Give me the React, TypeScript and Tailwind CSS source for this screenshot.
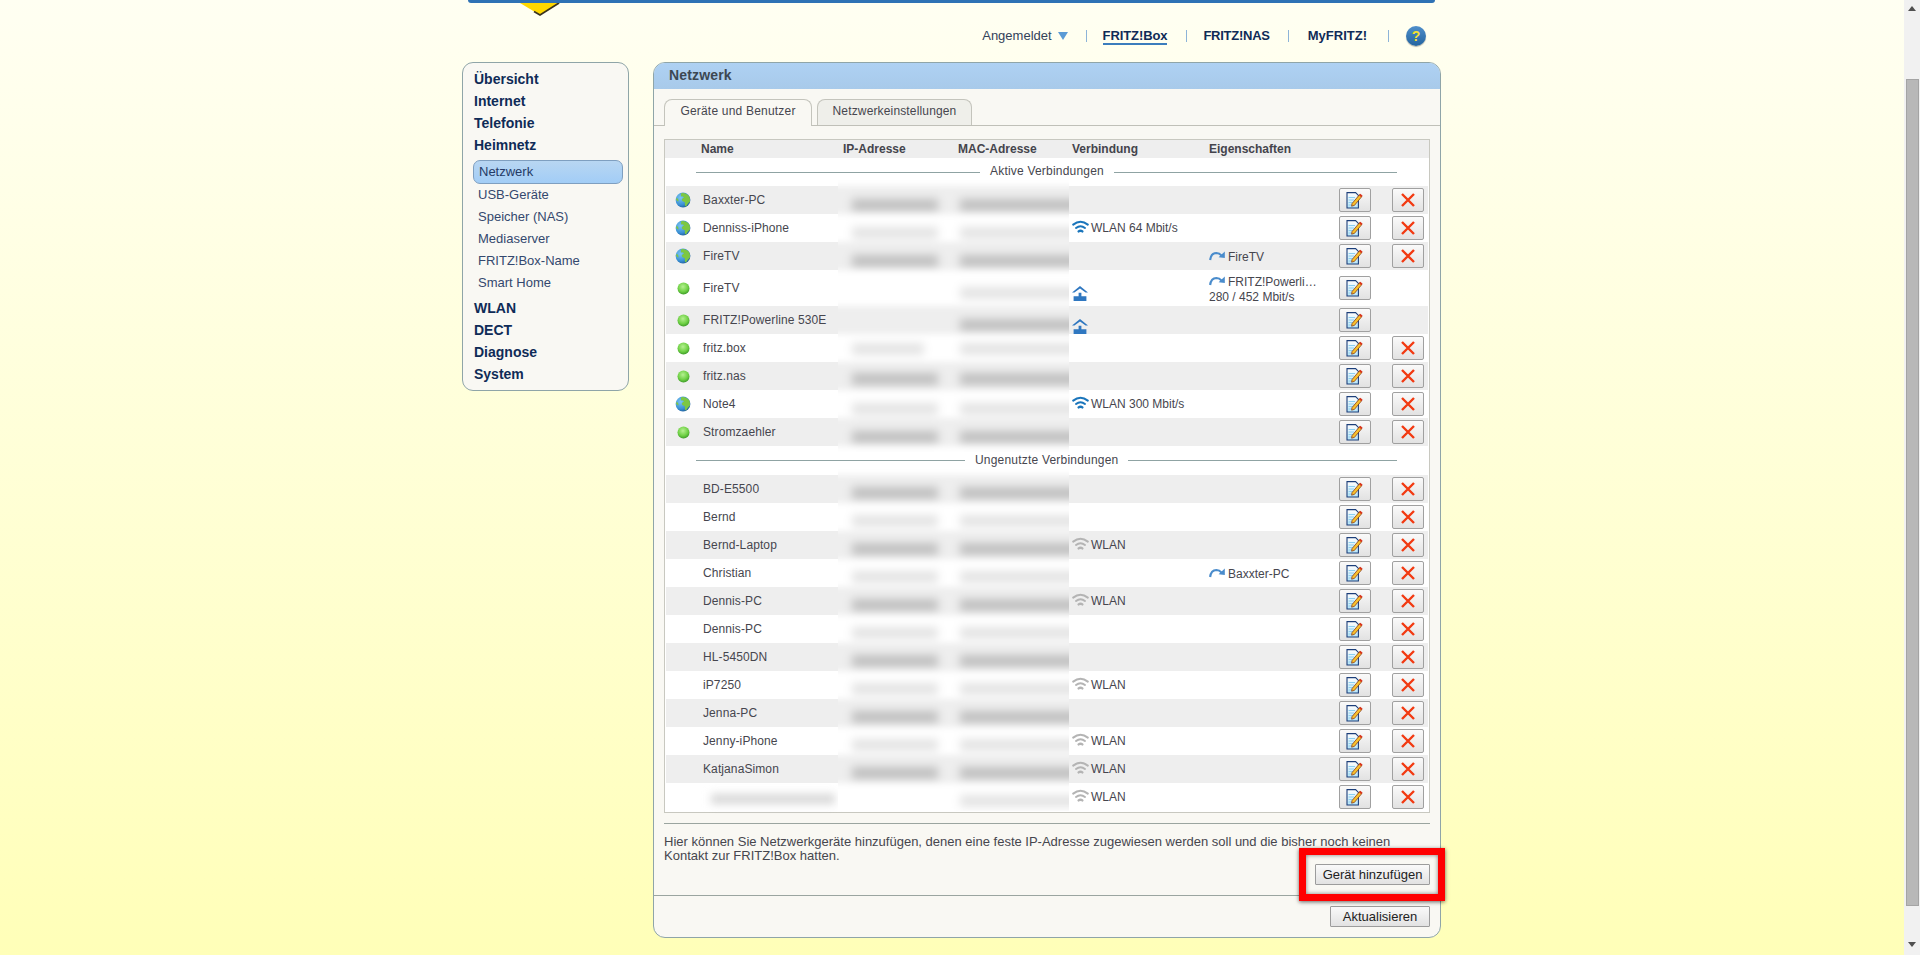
import React from "react";

type Conn = { icon: "wifi" | "wifiGrey" | "house"; text?: string };
type Row = {
  name: string;
  status?: "globe" | "ball";
  conn?: Conn;
  prop?: { first: string; second?: string };
  noDelete?: boolean;
  tall?: boolean;
  hiddenName?: boolean;
};

const active: Row[] = [
  { name: "Baxxter-PC", status: "globe" },
  { name: "Denniss-iPhone", status: "globe", conn: { icon: "wifi", text: "WLAN 64 Mbit/s" } },
  { name: "FireTV", status: "globe", prop: { first: "FireTV" } },
  { name: "FireTV", status: "ball", conn: { icon: "house" }, prop: { first: "FRITZ!Powerli…", second: "280 / 452 Mbit/s" }, noDelete: true, tall: true },
  { name: "FRITZ!Powerline 530E", status: "ball", conn: { icon: "house" }, noDelete: true },
  { name: "fritz.box", status: "ball" },
  { name: "fritz.nas", status: "ball" },
  { name: "Note4", status: "globe", conn: { icon: "wifi", text: "WLAN 300 Mbit/s" } },
  { name: "Stromzaehler", status: "ball" },
];

const unused: Row[] = [
  { name: "BD-E5500" },
  { name: "Bernd" },
  { name: "Bernd-Laptop", conn: { icon: "wifiGrey", text: "WLAN" } },
  { name: "Christian", prop: { first: "Baxxter-PC" } },
  { name: "Dennis-PC", conn: { icon: "wifiGrey", text: "WLAN" } },
  { name: "Dennis-PC" },
  { name: "HL-5450DN" },
  { name: "iP7250", conn: { icon: "wifiGrey", text: "WLAN" } },
  { name: "Jenna-PC" },
  { name: "Jenny-iPhone", conn: { icon: "wifiGrey", text: "WLAN" } },
  { name: "KatjanaSimon", conn: { icon: "wifiGrey", text: "WLAN" } },
  { name: "", hiddenName: true, conn: { icon: "wifiGrey", text: "WLAN" } },
];

function Globe() {
  return (
    <svg width="16" height="16" viewBox="0 0 16 16">
      <defs>
        <radialGradient id="gl" cx="35%" cy="35%" r="80%">
          <stop offset="0%" stopColor="#7cc6f2" />
          <stop offset="60%" stopColor="#3a90d4" />
          <stop offset="100%" stopColor="#164b85" />
        </radialGradient>
      </defs>
      <circle cx="8" cy="8" r="7.4" fill="url(#gl)" />
      <path d="M6.5 1 C9 .6 12 1.5 14 4 C15.2 6 15.2 8 14.8 10 C13.6 10.5 12.6 12 11 14.4 C9.6 14.2 9.6 12 10 10.5 C9.2 9.5 7.2 9.5 6.8 8 C6.6 6.6 8 6 9 5.4 C8.4 4.4 7.2 4.4 6 4.2 C5.8 3 6 2 6.5 1Z" fill="#7cc743" />
      <path d="M1.5 6 C2.6 6.2 3.8 7.4 3.4 9.4 C2.6 9.4 1.6 8.6 1.2 7.8Z" fill="#7cc743" />
    </svg>
  );
}

function Ball() {
  return (
    <svg width="13" height="13" viewBox="0 0 13 13">
      <defs>
        <radialGradient id="bl" cx="45%" cy="35%" r="65%">
          <stop offset="0%" stopColor="#b5f090" />
          <stop offset="65%" stopColor="#6ed044" />
          <stop offset="100%" stopColor="#3f9c2a" />
        </radialGradient>
      </defs>
      <circle cx="6.5" cy="6.5" r="6" fill="url(#bl)" />
    </svg>
  );
}

function Wifi({ color }: { color: string }) {
  return (
    <svg className="-translate-y-px" width="17" height="14" viewBox="0 0 17 14" fill="none" stroke={color} strokeWidth="2" strokeLinecap="round">
      <path d="M1.2 4.6 Q8.5 -1 15.8 4.6" />
      <path d="M4 8 Q8.5 4.4 13 8" />
      <path d="M6.6 11.4 Q8.5 10 10.4 11.4" strokeWidth="2.4" />
    </svg>
  );
}

function House() {
  return (
    <svg width="16" height="15" viewBox="0 0 16 15" fill="#2f77c0">
      <path d="M8 0 L16 6.6 L13.6 6.6 L8 2.6 L2.4 6.6 L0 6.6Z" />
      <path d="M1.6 10.2 H6.6 V6.8 H9.4 V10.2 H14.4 V15 H1.6Z" />
    </svg>
  );
}

function ArrowIcon() {
  return (
    <svg width="16" height="10" viewBox="0 0 16 10" fill="none">
      <path d="M1.1 9 Q2 2.2 7.4 2 Q10.4 2 12.6 4.6" stroke="#4a8ccc" strokeWidth="2.2" />
      <path d="M15.8 0.6 L15.8 7 L9.6 6.2Z" fill="#4a8ccc" />
    </svg>
  );
}

function EditIcon() {
  return (
    <svg width="18" height="17" viewBox="0 0 18 17">
      <defs>
        <linearGradient id="pg" x1="0" y1="0" x2="0" y2="1">
          <stop offset="0%" stopColor="#ffffff" />
          <stop offset="100%" stopColor="#b4e4f8" />
        </linearGradient>
      </defs>
      <path d="M1 .6 H9.6 L12.4 3.4 V16 H1Z" fill="url(#pg)" stroke="#1c3f7a" strokeWidth="1.1" />
      <path d="M2.6 5.5 H9 M2.6 8 H8 M2.6 10.5 H7 M2.6 13 H6" stroke="#8ccff0" strokeWidth="1" />
      <path d="M6 11.6 L13.6 2.6 L15.8 4.6 L8.4 13.4 L5.6 14.2Z" fill="#f8c02c" stroke="#7a2a10" strokeWidth="0.7" />
      <path d="M13 3.3 L14.4 1.7 L16.6 3.7 L15.2 5.3Z" fill="#d8341c" />
    </svg>
  );
}

function XIcon() {
  return (
    <svg width="14" height="14" viewBox="0 0 14 14" fill="none" stroke="#f23a12" strokeWidth="2.4">
      <path d="M1 1 L13 13 M13 1 L1 13" />
    </svg>
  );
}

function IconButton({ children }: { children: React.ReactNode }) {
  return (
    <button className="flex h-6 w-8 items-center justify-center rounded-[2px] border border-[#a0a0a0] bg-gradient-to-b from-[#fafafa] to-[#e2e2e2]">
      {children}
    </button>
  );
}

function TableRow({ row, grey }: { row: Row; grey: boolean }) {
  return (
    <div className={`mx-px flex items-center ${row.tall ? "h-9" : "h-7"} ${grey ? "bg-[#eeeeee]" : "bg-white"}`}>
      <div className="flex w-[37px] justify-center pr-[3px]">
        {row.status === "globe" && <Globe />}
        {row.status === "ball" && <Ball />}
      </div>
      <div className="w-[369px] tracking-[0.1px]">
        {row.hiddenName ? <div className="mt-[3px] ml-2 h-[10px] w-[124px] bg-[#d8d8d8] blur-[4px]" /> : row.name}
      </div>
      <div className="flex h-full w-[137px] items-center">
        {row.conn?.icon === "house" && (
          <div className={`self-end ${row.tall ? "pb-[5px]" : ""}`}>
            <House />
          </div>
        )}
        {row.conn?.icon === "wifi" && <Wifi color="#1a75bb" />}
        {row.conn?.icon === "wifiGrey" && <Wifi color="#b4b4b4" />}
        {row.conn?.text && <span className="ml-0.5">{row.conn.text}</span>}
      </div>
      <div className="w-[130px]">
        {row.prop && (
          <>
            <div className="flex items-center gap-[3px]">
              <ArrowIcon />
              <span className="translate-y-px">{row.prop.first}</span>
            </div>
            {row.prop.second && <div className="leading-[14px]">{row.prop.second}</div>}
          </>
        )}
      </div>
      <div className="w-[53px]">
        <IconButton>
          <EditIcon />
        </IconButton>
      </div>
      {!row.noDelete && (
        <IconButton>
          <XIcon />
        </IconButton>
      )}
    </div>
  );
}

function SectionRow({ text, tall, leftW }: { text: string; tall?: boolean; leftW: string }) {
  return (
    <div className={`flex items-center bg-white pl-[31px] ${tall ? "h-[29px]" : "h-7"}`}>
      <div className={`h-px bg-[#8fa3a3] ${leftW}`} />
      <div className="mx-[10px] -translate-y-px whitespace-nowrap tracking-[0.2px]">{text}</div>
      <div className="h-px flex-1 bg-[#8fa3a3]" />
      <div className="w-8" />
    </div>
  );
}

type Blurred = { h: number; grey: boolean; ip: boolean; mac: boolean; y: number; ipW?: number };

function BlurPatch({ rows, className }: { rows: Blurred[]; className: string }) {
  return (
    <div className={`absolute left-[173px] w-[231px] overflow-hidden bg-white ${className}`}>
      <div className="-mx-3 pt-[6px] blur-[3px]">
        {rows.map((r, i) => (
          <div key={i} className={`relative ${r.grey ? "bg-[#eeeeee]" : "bg-white"}`} style={{ height: r.h }}>
            {r.ip && (
              <div
                className={`absolute left-[26px] h-3 blur-[3px] ${r.grey ? "bg-[#c0c0c0]" : "bg-[#e4e4e4]"}`}
                style={{ top: r.y, width: r.ipW ?? 86 }}
              />
            )}
            {r.mac && (
              <div
                className={`absolute left-[134px] h-3 w-[125px] blur-[3px] ${r.grey ? "bg-[#c0c0c0]" : "bg-[#e4e4e4]"}`}
                style={{ top: r.y }}
              />
            )}
          </div>
        ))}
      </div>
    </div>
  );
}

const activeBlur: Blurred[] = [
  { h: 28, grey: true, ip: true, mac: true, y: 13 },
  { h: 28, grey: false, ip: true, mac: true, y: 13 },
  { h: 28, grey: true, ip: true, mac: true, y: 13 },
  { h: 36, grey: false, ip: false, mac: true, y: 17 },
  { h: 28, grey: true, ip: false, mac: true, y: 13 },
  { h: 28, grey: false, ip: true, mac: true, y: 9, ipW: 72 },
  { h: 28, grey: true, ip: true, mac: true, y: 11 },
  { h: 28, grey: false, ip: true, mac: true, y: 13 },
  { h: 28, grey: true, ip: true, mac: true, y: 13 },
  { h: 9, grey: false, ip: false, mac: false, y: 0 },
];

const unusedBlur: Blurred[] = unused.map((_, i) => ({
  h: 28,
  grey: i % 2 === 0,
  ip: i !== 11,
  mac: true,
  y: 12,
}));

const topNav = ["Übersicht", "Internet", "Telefonie", "Heimnetz"];
const subNav = ["USB-Geräte", "Speicher (NAS)", "Mediaserver", "FRITZ!Box-Name", "Smart Home"];
const bottomNav = ["WLAN", "DECT", "Diagnose", "System"];

function Sidebar() {
  return (
    <aside className="h-[329px] w-[167px] rounded-[11px] border border-[#8fa5a8] bg-[#f9f8f3] pt-[5px] pl-[11px] text-[#0f2b57]">
      {topNav.map((t) => (
        <div key={t} className="h-[22px] text-[14px] leading-[22px] font-bold">
          {t}
        </div>
      ))}
      <div className="mt-[4px] -ml-px h-6 w-[150px] rounded-[7px] border border-[#7f9fc0] bg-gradient-to-b from-[#b8d6f2] to-[#a2cdf6] pl-[5px] text-[13px] leading-[22px] text-[#243a66]">
        Netzwerk
      </div>
      <div>
        {subNav.map((t) => (
          <div key={t} className="h-[22px] pl-1 text-[13px] leading-[22px] text-[#34486e]">
            {t}
          </div>
        ))}
      </div>
      <div className="mt-[3px]">
        {bottomNav.map((t) => (
          <div key={t} className="h-[22px] text-[14px] leading-[22px] font-bold">
            {t}
          </div>
        ))}
      </div>
    </aside>
  );
}

function TopNav() {
  const sep = "h-3 w-px bg-[#8db4d8]";
  return (
    <div className="mt-[22px] flex h-[22px] items-center justify-end pr-[15px] text-[13px]">
      <span className="text-[#33425a]">Angemeldet</span>
      <svg className="ml-[6px]" width="10" height="8" viewBox="0 0 10 8" fill="#5b9bd5">
        <path d="M0 0 H10 L5 8Z" />
      </svg>
      <div className={`ml-[18px] ${sep}`} />
      <span className="ml-4 border-b-2 border-[#3b7dbd] leading-[15px] font-bold tracking-[-0.1px] text-[#0f2b57]">FRITZ!Box</span>
      <div className={`ml-[19px] ${sep}`} />
      <span className="ml-4 font-bold tracking-[-0.25px] text-[#0f2b57]">FRITZ!NAS</span>
      <div className={`ml-[18px] ${sep}`} />
      <span className="ml-[19px] font-bold text-[#0f2b57]">MyFRITZ!</span>
      <div className={`ml-[21px] ${sep}`} />
      <div className="ml-[17px] flex h-5 w-5 items-center justify-center rounded-full bg-gradient-to-b from-[#4f8fcb] to-[#23649f] text-[14px] font-bold text-[#f5e030] shadow-[0_1px_1px_rgba(0,0,0,0.3)]">
        ?
      </div>
    </div>
  );
}

export default function App() {
  return (
    <div className="flex h-[955px] overflow-hidden bg-gradient-to-b from-[#fffff2] to-[#ffffb8] font-['Liberation_Sans',Arial,sans-serif]">
      <div className="flex-1">
        <div className="ml-[462px] w-[979px]">
          <div className="relative mx-[6px] h-[3px] rounded-b-[4px] bg-[#2f72b5]">
            <svg className="absolute top-0 left-[52px]" width="40" height="16" viewBox="0 0 40 16">
              <path d="M0 3 L20 15 L40 3Z" fill="#ffd800" />
              <path d="M14 11.6 L20 15 L39 3" fill="none" stroke="#3a3320" strokeWidth="1.7" />
              <rect x="0" y="0" width="40" height="3" fill="#2f72b5" />
            </svg>
          </div>
          <TopNav />
          <div className="mt-[15px] flex gap-6">
            <Sidebar />
            <main className="flex h-[876px] w-[788px] flex-col rounded-[12px] border border-[#8fa5a8] bg-[#f9f8f3] text-[12px] text-[#46464e]">
              <div className="h-[26px] shrink-0 rounded-t-[11px] bg-gradient-to-b from-[#aed1f3] to-[#a8caea] pl-[15px] text-[14px] leading-[24px] font-bold tracking-[0.15px] text-[#3c4853]">
                Netzwerk
              </div>
              <div className="flex h-[37px] shrink-0 items-end gap-[5px] border-b border-[#c0c0b8] pl-[10px]">
                <div className="-mb-px h-[27px] w-[148px] rounded-t-[8px] border border-b-0 border-[#c4c4bc] bg-[#f9f8f3] text-center leading-[22px] tracking-[0.2px]">
                  Geräte und Benutzer
                </div>
                <div className="h-[26px] w-[155px] rounded-t-[8px] border border-b-0 border-[#c4c4bc] bg-[#efefea] text-center leading-[22px] tracking-[0.15px]">
                  Netzwerkeinstellungen
                </div>
              </div>
              <div className="flex flex-1 flex-col px-[10px] pt-[13px]">
                <div className="relative border border-[#c8c8c0] bg-white pb-px">
                  <div className="flex h-[18px] items-center bg-[#eeeeee] font-bold text-[#44444c]">
                    <div className="ml-[36px] w-[142px]">Name</div>
                    <div className="w-[115px]">IP-Adresse</div>
                    <div className="w-[114px]">MAC-Adresse</div>
                    <div className="w-[137px]">Verbindung</div>
                    <div>Eigenschaften</div>
                  </div>
                  <SectionRow text="Aktive Verbindungen" leftW="w-[284px]" />
                  {active.map((r, i) => (
                    <TableRow key={i} row={r} grey={i % 2 === 0} />
                  ))}
                  <SectionRow text="Ungenutzte Verbindungen" tall leftW="w-[269px]" />
                  {unused.map((r, i) => (
                    <TableRow key={i} row={r} grey={i % 2 === 0} />
                  ))}
                  <BlurPatch rows={activeBlur} className="top-[40px] h-[275px]" />
                  <BlurPatch rows={unusedBlur} className="top-[329px] h-[342px]" />
                </div>
                <div className="mt-[10px] h-px bg-[#9ba5a0]" />
                <p className="mt-[11px] text-[13px] leading-[14px]">
                  Hier können Sie Netzwerkgeräte hinzufügen, denen eine feste IP-Adresse zugewiesen werden soll und die bisher noch keinen
                  <br />
                  Kontakt zur FRITZ!Box hatten.
                </p>
                <div className="mt-[1px] flex justify-end">
                  <div className="relative">
                    <button className="h-[21px] w-[115px] rounded-[1px] border border-[#9c9c9c] bg-gradient-to-b from-[#fafafa] to-[#e2e2e2] text-[13px] text-[#222222]">
                      Gerät hinzufügen
                    </button>
                    <div className="absolute -top-4 -right-[15px] -bottom-[16px] -left-4 border-[7px] border-[#ff0000] shadow-[0_1px_4px_rgba(0,0,0,0.6),inset_0_0_4px_rgba(0,0,0,0.5)]" />
                  </div>
                </div>
              </div>
              <div className="flex h-[42px] shrink-0 justify-end rounded-b-[11px] border-t border-[#9ba5a0] pt-[10px] pr-[10px]">
                <button className="h-[21px] w-[100px] rounded-[1px] border border-[#9c9c9c] bg-gradient-to-b from-[#fafafa] to-[#e2e2e2] text-[13px] text-[#222222]">
                  Aktualisieren
                </button>
              </div>
            </main>
          </div>
        </div>
      </div>
      <div className="flex w-4 shrink-0 flex-col items-center bg-[#f1f1f1]">
        <svg className="mt-[6px]" width="8" height="5" viewBox="0 0 8 5" fill="#505050">
          <path d="M4 0 L8 5 H0Z" />
        </svg>
        <div className="mt-[68px] h-[827px] w-[13px] border border-[#a4a4a4] bg-[#b8b8b8]" />
        <svg className="mt-[36px]" width="8" height="5" viewBox="0 0 8 5" fill="#505050">
          <path d="M0 0 H8 L4 5Z" />
        </svg>
      </div>
    </div>
  );
}
